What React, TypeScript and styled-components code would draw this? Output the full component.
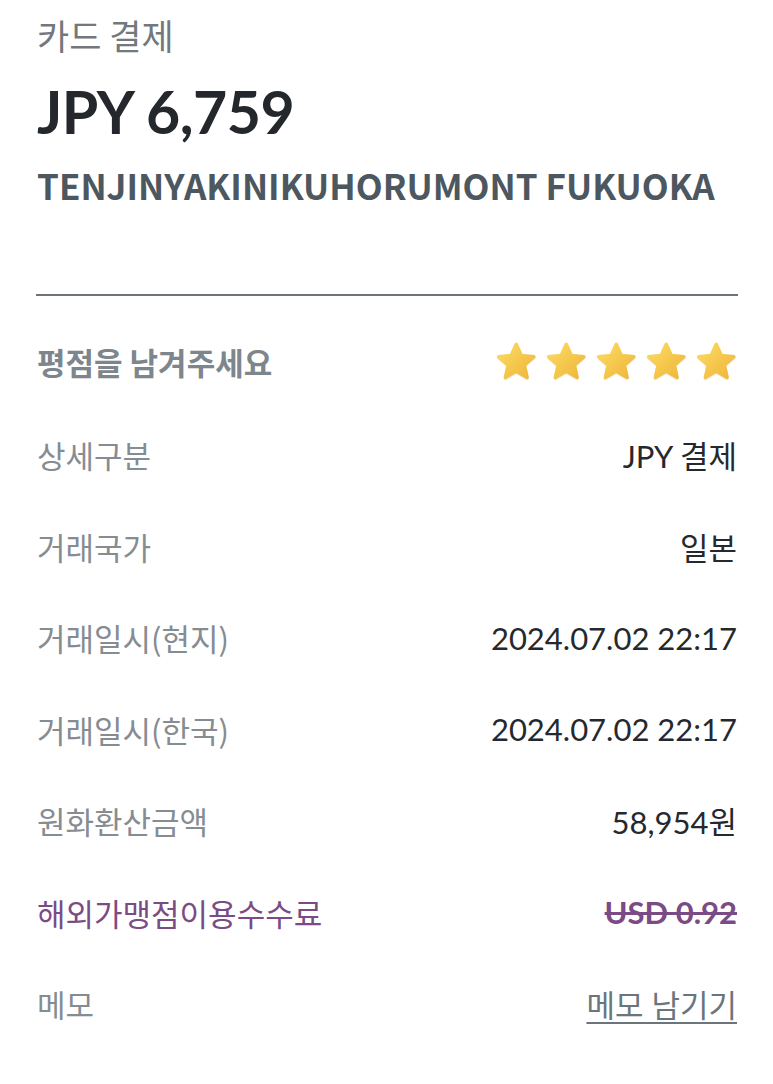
import React from "react";
import styled, { createGlobalStyle } from "styled-components";

const Global = createGlobalStyle`
  html, body { margin: 0; padding: 0; background: #ffffff; }
  body { font-family: "Noto Sans CJK KR", "Noto Sans", sans-serif; }
`;

const Page = styled.div`
  width: 773px;
  padding: 0 36px 0 37px;
  box-sizing: border-box;
`;

const Header = styled.header`
  display: flex;
  flex-direction: column;
  padding-top: 14px;
`;

const Kind = styled.div`
  font-size: 35px;
  line-height: 42px;
  color: #72787d;
  font-family: "Noto Sans CJK KR", sans-serif;
`;

const Amount = styled.div`
  margin-top: 20px;
  font-family: "Lato", "Noto Sans CJK KR", sans-serif;
  font-weight: 700;
  font-size: 59px;
  line-height: 72px;
  color: #24282c;
  letter-spacing: -0.5px;
`;

const Merchant = styled.div`
  margin-top: 15px;
  font-family: "Noto Sans CJK KR", sans-serif;
  font-weight: 700;
  font-size: 35px;
  line-height: 44px;
  color: #4d5760;
`;

const Divider = styled.hr`
  margin: 87px -1px 0 -1px;
  border: none;
  height: 2px;
  background: #6c7379;
`;

const List = styled.div`
  display: flex;
  flex-direction: column;
  padding-top: 17px;
`;

const Row = styled.div<{ $tall?: boolean }>`
  display: flex;
  align-items: center;
  justify-content: space-between;
  height: ${(p) => (p.$tall ? "96px" : "91.5px")};
`;

const Label = styled.span<{ $tone?: "bold" | "accent" }>`
  font-family: "Noto Sans CJK KR", sans-serif;
  font-size: 31px;
  font-weight: ${(p) => (p.$tone === "bold" ? 700 : 400)};
  color: ${(p) =>
    p.$tone === "bold" ? "#7d868d" : p.$tone === "accent" ? "#7a4b85" : "#858c92"};
`;

const Value = styled.span<{ $variant?: "strike" | "link" }>`
  font-family: "Lato", "Noto Sans CJK KR", sans-serif;
  font-size: 31px;
  font-weight: ${(p) => (p.$variant === "strike" ? 700 : 400)};
  color: ${(p) =>
    p.$variant === "strike" ? "#7a4b85" : p.$variant === "link" ? "#6b757c" : "#25292d"};
  text-decoration: ${(p) =>
    p.$variant === "strike" ? "line-through" : p.$variant === "link" ? "underline" : "none"};
  text-decoration-thickness: ${(p) => (p.$variant === "strike" ? "3px" : "2px")};
  text-underline-offset: 5px;
`;

const Stars = styled.div`
  display: flex;
  gap: 9.5px;
  margin-right: 1px;
`;

const Star = ({ id }: { id: number }) => (
  <svg width="40.5" height="39" viewBox="1.6 1.6 20.8 20.2">
    <defs>
      <linearGradient id={`g${id}`} x1="0" y1="0" x2="1" y2="1">
        <stop offset="0" stopColor="#fbdc62" />
        <stop offset="1" stopColor="#efb53a" />
      </linearGradient>
      <filter id={`s${id}`} x="-20%" y="-20%" width="140%" height="140%">
        <feDropShadow dx="0" dy="0.4" stdDeviation="0.35" floodColor="#c98f1a" floodOpacity="0.35" />
      </filter>
    </defs>
    <path
      d="M12 2.8 L14.6 8.6 L21.1 9.2 L16.2 13.5 L17.6 19.9 L12 16.6 L6.4 19.9 L7.8 13.5 L2.9 9.2 L9.4 8.6 Z"
      fill={`url(#g${id})`}
      stroke={`url(#g${id})`}
      strokeWidth="1.8"
      strokeLinejoin="round"
      filter={`url(#s${id})`}
    />
  </svg>
);

const rows: { label: string; value: string }[] = [
  { label: "상세구분", value: "JPY 결제" },
  { label: "거래국가", value: "일본" },
  { label: "거래일시(현지)", value: "2024.07.02 22:17" },
  { label: "거래일시(한국)", value: "2024.07.02 22:17" },
  { label: "원화환산금액", value: "58,954원" },
];

export default function App() {
  return (
    <>
      <Global />
      <Page>
        <Header>
          <Kind>카드 결제</Kind>
          <Amount>JPY 6,759</Amount>
          <Merchant>TENJINYAKINIKUHORUMONT FUKUOKA</Merchant>
        </Header>
        <Divider />
        <List>
          <Row $tall>
            <Label $tone="bold">평점을 남겨주세요</Label>
            <Stars>
              {[0, 1, 2, 3, 4].map((i) => (
                <Star key={i} id={i} />
              ))}
            </Stars>
          </Row>
          {rows.map((r) => (
            <Row key={r.label}>
              <Label>{r.label}</Label>
              <Value>{r.value}</Value>
            </Row>
          ))}
          <Row>
            <Label $tone="accent">해외가맹점이용수수료</Label>
            <Value $variant="strike">USD 0.92</Value>
          </Row>
          <Row>
            <Label>메모</Label>
            <Value $variant="link">메모 남기기</Value>
          </Row>
        </List>
      </Page>
    </>
  );
}
